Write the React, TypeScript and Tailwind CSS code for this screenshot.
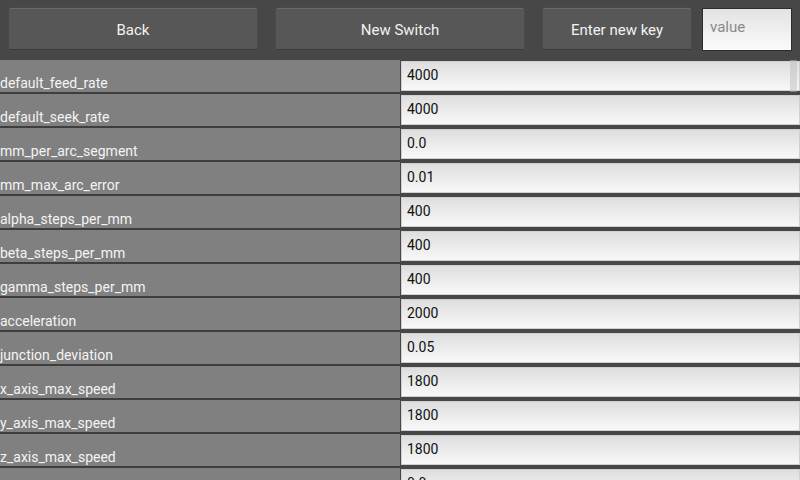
import React from 'react'

const ROWS: [string, string][] = [
  ['default_feed_rate', '4000'],
  ['default_seek_rate', '4000'],
  ['mm_per_arc_segment', '0.0'],
  ['mm_max_arc_error', '0.01'],
  ['alpha_steps_per_mm', '400'],
  ['beta_steps_per_mm', '400'],
  ['gamma_steps_per_mm', '400'],
  ['acceleration', '2000'],
  ['junction_deviation', '0.05'],
  ['x_axis_max_speed', '1800'],
  ['y_axis_max_speed', '1800'],
  ['z_axis_max_speed', '1800'],
  ['z_acceleration', '0.0'],
]

function Btn({ label, w }: { label: string; w: string }) {
  return (
    <div
      className={`${w} h-[42px] flex items-center justify-center pt-[2px] rounded-[2px] bg-[#575757] border-t border-t-[#6a6a6a] border-b border-b-[#3a3a3a] shadow-[0_0_0_1px_#4a4a4a] text-[15px] text-[#f2f2f2]`}
    >
      {label}
    </div>
  )
}

function Row({ name, value, first }: { name: string; value: string; first: boolean }) {
  return (
    <div className="flex h-[34px] shrink-0">
      <div className="w-[400px] flex flex-col">
        <div className="h-[32px] bg-[#808080] flex items-end pb-[2px] text-[14px] text-[#f4f4f4] leading-none">
          {name}
        </div>
        <div className="h-[2px] bg-[#3e3e3e]" />
      </div>
      <div className="flex-1 bg-[#474747] pt-[1px] pb-[3px] pl-[1px] relative">
        <div className="h-full bg-gradient-to-b from-[#dedede] to-[#f8f8f8] border border-[#d0d0d0] flex items-center pl-[5px] pb-[2px] text-[14px] text-[#111]">
          {value}
        </div>
        {first && <div className="absolute right-[3px] top-0 w-[7px] h-[32px] bg-[#bdbdbd]/50" />}
      </div>
    </div>
  )
}

export default function App() {
  return (
    <div className="w-[800px] h-[480px] overflow-hidden bg-[#474747] flex flex-col" style={{ fontFamily: 'Roboto, "Noto Sans", sans-serif' }}>
      <div className="h-[60px] shrink-0 flex items-center pl-[9px] pb-[2px]">
        <Btn label="Back" w="w-[248px]" />
        <div className="w-[19px]" />
        <Btn label="New Switch" w="w-[248px]" />
        <div className="w-[19px]" />
        <Btn label="Enter new key" w="w-[148px]" />
        <div className="w-[11px]" />
        <div className="w-[90px] h-[43px] border border-[#2c2c2c] bg-gradient-to-b from-[#e2e2e2] to-[#fbfbfb] pl-[7px] pt-[11px] text-[15px] text-[#8a8a8a] leading-none">
          value
        </div>
      </div>
      <div className="flex flex-col">
        {ROWS.map(([n, v], i) => (
          <Row key={n} name={n} value={v} first={i === 0} />
        ))}
      </div>
    </div>
  )
}
